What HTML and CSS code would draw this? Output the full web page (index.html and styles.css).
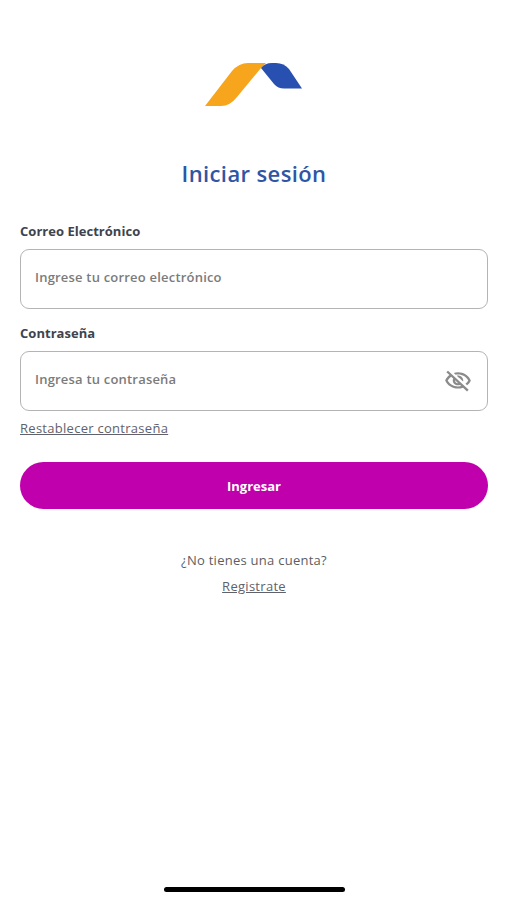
FILE: index.html
```html
<!DOCTYPE html>
<html lang="es">
<head>
    <meta charset="UTF-8">
    <meta name="viewport" content="width=device-width, initial-scale=1.0">
    <title>Iniciar sesión</title>
    <link rel="stylesheet" href="styles.css">
</head>
<body>
    <main class="login">
        <svg class="logo" viewBox="0 0 98 46" aria-hidden="true">
            <path fill="#f6a51c" d="M0 44 L27 9 Q34 1 43 1 H61 L56 6 L32 35 Q25 44 16 44 Z"/>
            <path fill="#2850b0" d="M56 6 Q60 1 67 1 H71 Q79 1 84 7 L97 26.5 H79 Q73 26.5 69 22 Z"/>
        </svg>
        <h1 class="title">Iniciar sesión</h1>

        <form class="form">
            <label class="label" for="correo">Correo Electrónico</label>
            <div class="field">
                <input id="correo" class="input correo" type="email" placeholder="Ingrese tu correo electrónico">
            </div>

            <label class="label" for="clave">Contraseña</label>
            <div class="field">
                <input id="clave" class="input clave" type="password" placeholder="Ingresa tu contraseña">
                <svg class="eye" viewBox="0 0 24 24" preserveAspectRatio="none" aria-hidden="true">
                    <path d="M12 6c3.79 0 7.17 2.13 8.82 5.5-.59 1.22-1.42 2.27-2.41 3.12l1.41 1.41c1.39-1.23 2.49-2.77 3.18-4.53C21.27 7.11 17 4 12 4c-1.27 0-2.49.2-3.64.57l1.65 1.65C10.66 6.09 11.32 6 12 6zm-1.07 1.14L13 9.21c.57.25 1.03.71 1.28 1.28l2.07 2.07c.08-.34.14-.7.14-1.07C16.5 9.01 14.48 7 12 7c-.37 0-.72.05-1.07.14zM2.01 3.87l2.68 2.68C3.06 7.83 1.77 9.53 1 11.5 2.73 15.89 7 19 12 19c1.52 0 2.98-.29 4.32-.82l3.42 3.42 1.41-1.41L3.42 2.45 2.01 3.87zm7.5 7.5l2.61 2.61c-.04.01-.08.02-.12.02-1.38 0-2.5-1.12-2.5-2.5 0-.05.01-.08.01-.13zm-3.4-3.4l1.75 1.75c-.23.55-.36 1.15-.36 1.78 0 2.48 2.02 4.5 4.5 4.5.63 0 1.23-.13 1.77-.36l.98.98c-.88.24-1.8.38-2.75.38-3.79 0-7.17-2.13-8.82-5.5.7-1.43 1.72-2.61 2.93-3.53z"/>
                </svg>
            </div>

            <a class="link reset" href="#">Restablecer contraseña</a>
            <button class="submit" type="button">Ingresar</button>
        </form>

        <p class="question">¿No tienes una cuenta?</p>
        <a class="link register" href="#">Registrate</a>
        <div class="home-bar"></div>
    </main>
</body>
</html>
```
FILE: styles.css
```css
* {
    box-sizing: border-box;
}

body {
    margin: 0;
    background-color: #fff;
    font-family: "Open Sans", "Noto Sans", sans-serif;
    color: #444650;
}

.login {
    display: flex;
    flex-direction: column;
    align-items: center;
    height: 900px;
    padding: 62px 19px 8px 20px;
}

.logo {
    width: 98px;
    height: 46px;
}

.title {
    margin: 50px 0 0;
    font-size: 22px;
    line-height: 30px;
    font-weight: 600;
    letter-spacing: 0.38px;
    color: #2f55a4;
}

.form {
    display: flex;
    flex-direction: column;
    width: 468px;
    margin-top: 33px;
}

.label {
    height: 28px;
    font-size: 13px;
    line-height: 20px;
    font-weight: 700;
    letter-spacing: 0.03px;
    white-space: nowrap;
    color: #40434e;
}

.field {
    display: flex;
    align-items: center;
    height: 60px;
    margin-bottom: 14px;
    padding: 0 15px 0 14px;
    border: 1px solid #b4b4b4;
    border-radius: 9px;
}

.input {
    flex: 1;
    min-width: 0;
    height: 40px;
    padding: 0 0 4px;
    border: none;
    outline: none;
    background: none;
    font-family: inherit;
    font-size: 13px;
    font-weight: 600;
    letter-spacing: 0.2px;
    color: #40434e;
}

.input::placeholder {
    color: #7b7b7b;
    opacity: 1;
}

.eye {
    width: 28px;
    height: 26px;
    fill: #8b8b8b;
}

.link {
    font-size: 13px;
    line-height: 20px;
    letter-spacing: 0.28px;
    color: #5f616b;
    text-underline-offset: 1px;
}

.reset {
    align-self: flex-start;
    margin-top: -7px;
}

.submit {
    height: 47px;
    margin-top: 24px;
    border: none;
    border-radius: 24px;
    background-color: #c000ac;
    font-family: inherit;
    font-size: 13px;
    font-weight: 700;
    color: #fff;
}

.question {
    margin: 41px 0 6px;
    font-size: 13px;
    line-height: 20px;
    letter-spacing: 0.26px;
    color: #5c5d63;
}

.home-bar {
    width: 181px;
    height: 5px;
    margin-top: auto;
    border-radius: 3px;
    background-color: #000;
}
```
